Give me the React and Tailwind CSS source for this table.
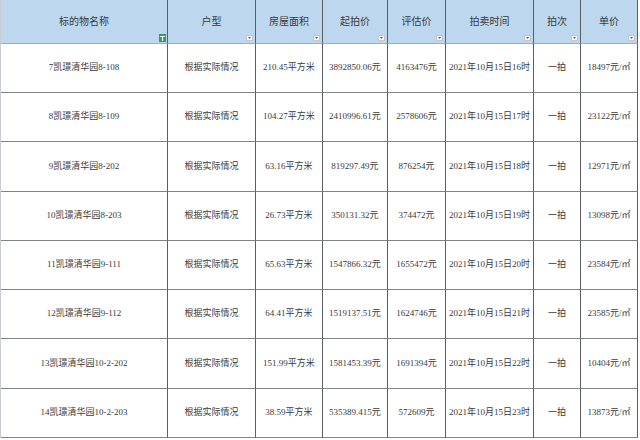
import React from "react";

const rows = [
  ["7凯璟清华园8-108", "根据实际情况", "210.45平方米", "3892850.06元", "4163476元", "2021年10月15日16时", "一拍", "18497元/㎡"],
  ["8凯璟清华园8-109", "根据实际情况", "104.27平方米", "2410996.61元", "2578606元", "2021年10月15日17时", "一拍", "23122元/㎡"],
  ["9凯璟清华园8-202", "根据实际情况", "63.16平方米", "819297.49元", "876254元", "2021年10月15日18时", "一拍", "12971元/㎡"],
  ["10凯璟清华园8-203", "根据实际情况", "26.73平方米", "350131.32元", "374472元", "2021年10月15日19时", "一拍", "13098元/㎡"],
  ["11凯璟清华园9-111", "根据实际情况", "65.63平方米", "1547866.32元", "1655472元", "2021年10月15日20时", "一拍", "23584元/㎡"],
  ["12凯璟清华园9-112", "根据实际情况", "64.41平方米", "1519137.51元", "1624746元", "2021年10月15日21时", "一拍", "23585元/㎡"],
  ["13凯璟清华园10-2-202", "根据实际情况", "151.99平方米", "1581453.39元", "1691394元", "2021年10月15日22时", "一拍", "10404元/㎡"],
  ["14凯璟清华园10-2-203", "根据实际情况", "38.59平方米", "535389.415元", "572609元", "2021年10月15日23时", "一拍", "13873元/㎡"],
];

const headers = ["标的物名称", "户型", "房屋面积", "起拍价", "评估价", "拍卖时间", "拍次", "单价"];
const heights = ["h-[49px]", "h-[49px]", "h-[50px]", "h-[49px]", "h-[49px]", "h-[49px]", "h-[50px]", "h-[49px]"];

function FilterBtn({ active }) {
  if (active) {
    return (
      <div className="absolute right-[1px] bottom-[1px] w-[7px] h-[8px] bg-[#2e9e62] flex items-center justify-center">
        <svg width="5" height="5" viewBox="0 0 5 5">
          <path d="M0 0.5H5M2.5 0.5V5" stroke="#fff" strokeWidth="1.2" />
        </svg>
      </div>
    );
  }
  return (
    <div className="absolute right-[2px] bottom-[2px] w-[7px] h-[6px] bg-[#f4f6f8] border border-[#c4c8cc] flex items-center justify-center">
      <svg width="3" height="2" viewBox="0 0 3 2">
        <path d="M0 0H3L1.5 2Z" fill="#666" />
      </svg>
    </div>
  );
}

export default function App() {
  return (
    <div
      className="w-[640px] h-[440px] bg-white overflow-hidden text-[#3a3a3a]"
      style={{ fontFamily: '"Liberation Serif", "Noto Sans CJK SC", serif' }}
    >
      <div className="grid grid-cols-[167px_88px_67px_65px_58px_88px_47px_57px] w-[637px] border-l border-l-[#c9ccd0]">
        {headers.map((h, i) => (
          <div
            key={h}
            className="relative h-[44px] bg-[#bdd7ee] border-r border-r-[#5a5e62] border-b border-b-[#8fb8b0] flex items-center justify-center text-[10px]"
          >
            {h}
            <FilterBtn active={i === 0} />
          </div>
        ))}
        {rows.map((r, ri) =>
          r.map((c, ci) => (
            <div
              key={ri + "-" + ci}
              className={`${heights[ri]} border-r border-r-[#5a5e62] border-b border-b-[#808488] flex items-center justify-center text-[9px] whitespace-nowrap`}
            >
              {c}
            </div>
          ))
        )}
      </div>
    </div>
  );
}
